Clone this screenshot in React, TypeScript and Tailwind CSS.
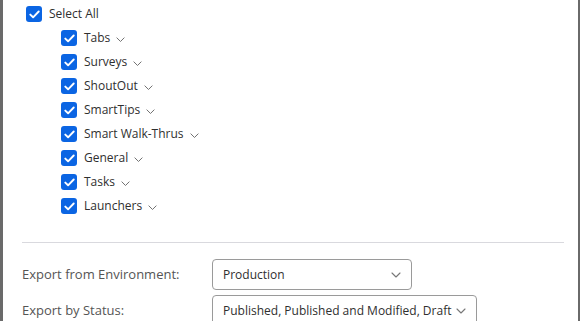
import React from "react";

const Check = () => (
  <span className="flex h-4 w-4 shrink-0 items-center justify-center rounded-[3px] bg-[#0b65e3]">
    <svg width="11" height="9" viewBox="0 0 11 9" fill="none">
      <path d="M1.3 4.6 L4.1 7.3 L9.7 1.5" stroke="white" strokeWidth="1.9" strokeLinecap="round" strokeLinejoin="round" />
    </svg>
  </span>
);

const Chev = ({ w = 9, color = "#6f6f6f" }: { w?: number; color?: string }) => (
  <svg width={w} height={w * 0.6} viewBox="0 0 10 6" fill="none">
    <path d="M1 1 L5 5 L9 1" stroke={color} strokeWidth="1.1" strokeLinecap="round" strokeLinejoin="round" />
  </svg>
);

const items = ["Tabs", "Surveys", "ShoutOut", "SmartTips", "Smart Walk-Thrus", "General", "Tasks", "Launchers"];

export default function App() {
  return (
    <div
      className="flex h-[321px] w-[580px] overflow-hidden bg-[#6a6a6a]"
      style={{ fontFamily: '"Open Sans", "Noto Sans", sans-serif' }}
    >
      <div className="ml-[3px] mr-[2px] flex flex-1 flex-col bg-white pl-[23px] pr-[14px] text-[12px] text-[#2f2f2f]">
        <div className="mt-[2px] flex h-6 shrink-0 items-center gap-[7px]">
          <Check />
          <span>Select All</span>
        </div>
        <div className="shrink-0 pl-[35px]">
          {items.map((t) => (
            <div key={t} className="flex h-6 items-center">
              <Check />
              <span className="ml-[7px]">{t}</span>
              <span className="ml-[6px] mt-[3px] flex">
                <Chev />
              </span>
            </div>
          ))}
        </div>
        <div className="mt-[24px] h-px shrink-0 bg-[#d9d9de] -ml-[4px]" />
        <div className="mt-4 flex shrink-0 flex-col gap-[5px] -ml-[4px]">
          <div className="flex items-center">
            <span className="w-[190px] text-[13px] text-[#555]">Export from Environment:</span>
            <div className="flex h-[31px] w-[200px] items-center justify-between rounded-[4px] border border-[#9a9a9a] pl-[10px] pr-[10px] text-[#2f2f2f]">
              <span>Production</span>
              <Chev w={10} color="#777" />
            </div>
          </div>
          <div className="flex items-center">
            <span className="w-[190px] text-[13px] text-[#555]">Export by Status:</span>
            <div className="flex h-[31px] w-[265px] items-center justify-between whitespace-nowrap rounded-[4px] border border-[#9a9a9a] pl-[10px] pr-[10px] text-[#2f2f2f]">
              <span>Published, Published and Modified, Draft</span>
              <Chev w={10} color="#777" />
            </div>
          </div>
        </div>
      </div>
    </div>
  );
}
